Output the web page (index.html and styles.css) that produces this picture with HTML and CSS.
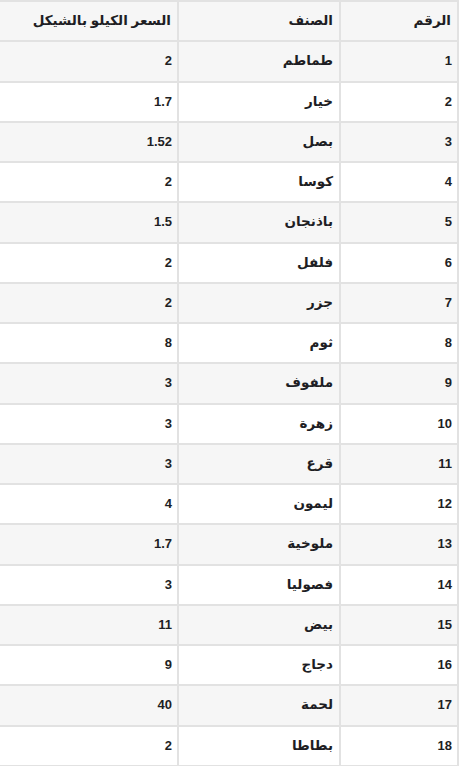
FILE: index.html
```html
<!DOCTYPE html>
<html lang="ar" dir="rtl">
<head>
<meta charset="utf-8">
<title>أسعار الخضار</title>
<link rel="stylesheet" href="styles.css">
</head>
<body>
<div class="wrap">
<table class="prices">
<colgroup>
<col class="c-num">
<col class="c-item">
<col class="c-price">
</colgroup>
<thead>
<tr><th>الرقم</th><th>الصنف</th><th>السعر الكيلو بالشيكل</th></tr>
</thead>
<tbody>
<tr><td>1</td><td class="item">طماطم</td><td>2</td></tr>
<tr><td>2</td><td class="item">خيار</td><td>1.7</td></tr>
<tr><td>3</td><td class="item">بصل</td><td>1.52</td></tr>
<tr><td>4</td><td class="item">كوسا</td><td>2</td></tr>
<tr><td>5</td><td class="item">باذنجان</td><td>1.5</td></tr>
<tr><td>6</td><td class="item">فلفل</td><td>2</td></tr>
<tr><td>7</td><td class="item">جزر</td><td>2</td></tr>
<tr><td>8</td><td class="item">ثوم</td><td>8</td></tr>
<tr><td>9</td><td class="item">ملفوف</td><td>3</td></tr>
<tr><td>10</td><td class="item">زهرة</td><td>3</td></tr>
<tr><td>11</td><td class="item">قرع</td><td>3</td></tr>
<tr><td>12</td><td class="item">ليمون</td><td>4</td></tr>
<tr><td>13</td><td class="item">ملوخية</td><td>1.7</td></tr>
<tr><td>14</td><td class="item">فصوليا</td><td>3</td></tr>
<tr><td>15</td><td class="item">بيض</td><td>11</td></tr>
<tr><td>16</td><td class="item">دجاج</td><td>9</td></tr>
<tr><td>17</td><td class="item">لحمة</td><td>40</td></tr>
<tr><td>18</td><td class="item">بطاطا</td><td>2</td></tr>
</tbody>
</table>
</div>
</body>
</html>
```
FILE: styles.css
```css
html, body {
  margin: 0;
  padding: 0;
  background: #ffffff;
}
body {
  font-family: "Liberation Sans", "DejaVu Sans", Arial, sans-serif;
  font-size: 13px;
  font-weight: bold;
  color: #1e1e24;
}
.wrap {
  padding-right: 4px;
  margin-left: -6px;
}
.prices {
  width: 100%;
  table-layout: fixed;
  border-collapse: collapse;
  border: 2px solid #e2e2e2;
}
.c-num { width: 118px; }
.c-item { width: 162px; }
.prices th,
.prices td {
  border: 2px solid #e2e2e2;
  text-align: right;
  padding: 9.13px 5px;
  line-height: 20px;
  font-weight: bold;
  white-space: nowrap;
}
.prices th,
.prices td.item {
  font-size: 13.5px;
  padding-right: 6px;
}
.prices thead tr {
  background: #f6f6f6;
}
.prices tbody tr:nth-child(odd) {
  background: #f6f6f6;
}
.prices tbody tr:nth-child(even) {
  background: #ffffff;
}
```
